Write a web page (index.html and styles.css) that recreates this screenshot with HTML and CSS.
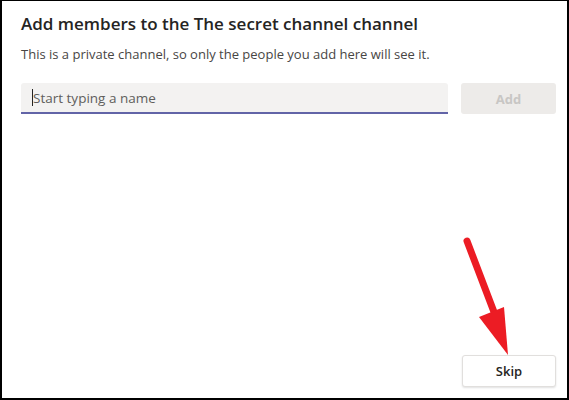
FILE: index.html
```html
<!DOCTYPE html>
<html lang="en">
<head>
  <meta charset="UTF-8">
  <title>Add members</title>
  <link rel="stylesheet" href="styles.css">
</head>
<body>
  <div class="dialog">
    <h2 class="title">Add members to the The secret channel channel</h2>
    <p class="subtitle">This is a private channel, so only the people you add here will see it.</p>

    <div class="picker">
      <div class="name-input">
        <span class="caret"></span>
        <span class="placeholder">Start typing a name</span>
      </div>
      <button class="add-btn" disabled>Add</button>
    </div>

    <div class="footer">
      <button class="skip-btn">Skip</button>
    </div>

    <svg class="arrow" width="569" height="400" viewBox="0 0 569 400">
      <line x1="467" y1="241" x2="494" y2="312" stroke="#ec1c24" stroke-width="7" stroke-linecap="round"/>
      <polygon points="479,317 504,307 508,355" fill="#ec1c24"/>
    </svg>
  </div>
</body>
</html>
```

FILE: styles.css
```css
* {
  box-sizing: border-box;
}

body {
  margin: 0;
  font-family: "Open Sans", "Liberation Sans", sans-serif;
  color: #252423;
  background: white;
}

.dialog {
  position: relative;
  width: 569px;
  height: 400px;
  border-style: solid;
  border-color: #000;
  border-width: 1px 2px 2px 2px;
  padding: 0 11px 0 19px;
  display: flex;
  flex-direction: column;
}

.title {
  margin: 11px 0 0;
  font-size: 17px;
  font-weight: 600;
  line-height: 24px;
  color: #252423;
}

.subtitle {
  margin: 8px 0 0;
  font-size: 13px;
  line-height: 20px;
  color: #484644;
}

.picker {
  display: flex;
  gap: 13px;
  margin-top: 19px;
}

.name-input {
  flex: 1;
  height: 31px;
  background: #f3f2f1;
  border-bottom: 2px solid #6264a7;
  border-radius: 3px 3px 0 0;
  display: flex;
  align-items: center;
  padding-left: 11px;
}

.caret {
  width: 1px;
  height: 17px;
  background: #252423;
}

.placeholder {
  font-size: 13.5px;
  color: #605e5c;
}

.add-btn {
  width: 95px;
  height: 31px;
  border: none;
  border-radius: 3px;
  background: #edebe9;
  color: #c8c6c4;
  font-family: inherit;
  font-size: 13px;
  font-weight: 700;
}

.footer {
  margin-top: auto;
  margin-bottom: 11px;
  display: flex;
  justify-content: flex-end;
}

.skip-btn {
  width: 94px;
  height: 32px;
  background: white;
  border: 1px solid #e1dfdd;
  border-radius: 3px;
  box-shadow: 0 1px 2px rgba(0, 0, 0, 0.12);
  color: #252423;
  font-family: inherit;
  font-size: 13px;
  font-weight: 600;
}

.arrow {
  position: absolute;
  left: -2px;
  top: -1px;
  pointer-events: none;
}
```
